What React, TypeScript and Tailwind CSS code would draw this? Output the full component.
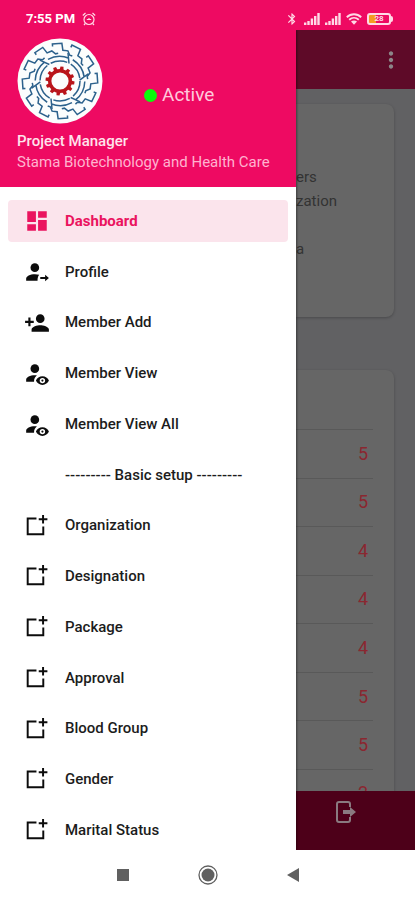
import { ReactNode } from "react";
import { MdBluetooth, MdDashboard, MdMoreVert, MdPersonAdd } from "react-icons/md";

const PERSON = "M10 4a4 4 0 1 0 0 8a4 4 0 0 0 0-8z";

function ProfileIcon() {
  return (
    <svg viewBox="0 0 24 24" className="size-[26px]" fill="currentColor" aria-hidden>
      <path d={PERSON} />
      <path d="M10 14c-4.400 0-8 1.800-8 4v2h10.500c0-2.200.3-4 1.500-5.500C12.800 14.200 11.400 14 10 14z" />
      <path d="M15 16.500h4.500v-2l3.500 3l-3.500 3v-2H15z" />
    </svg>
  );
}

function MemberViewIcon() {
  return (
    <svg viewBox="0 0 24 24" className="size-[26px]" fill="currentColor" aria-hidden>
      <path d={PERSON} />
      <path d="M9.270 20H2v-2c0-2.210 3.580-4 8-4l1.890.110C10.600 15.400 9.100 17 9.270 20z" />
      <path
        fillRule="evenodd"
        d="M17 15c-2.730 0-5.060 1.660-6 4c.940 2.340 3.270 4 6 4s5.060-1.660 6-4c-.940-2.340-3.270-4-6-4zm0 6.500a2.500 2.500 0 1 1 0-5a2.500 2.500 0 0 1 0 5z"
      />
      <circle cx="17" cy="19" r="1" />
    </svg>
  );
}

function AddBoxIcon() {
  return (
    <svg viewBox="0 0 24 24" className="size-[26px]" fill="none" stroke="currentColor" strokeWidth="1.800" aria-hidden>
      <path d="M11.500 5.100H3.400V19.600H17.800V12.500" />
      <path d="M17.600 1.800v8M13.600 5.800h8" />
    </svg>
  );
}

function LogoutIcon() {
  return (
    <svg viewBox="0 0 22 24" className="h-6 w-[22px]" fill="none" stroke="currentColor" strokeWidth="2" aria-hidden>
      <path d="M15 7V4a2 2 0 0 0-2-2H4a2 2 0 0 0-2 2v16a2 2 0 0 0 2 2h9a2 2 0 0 0 2-2v-3" />
      <path d="M8 10h7V7l6 5l-6 5v-3H8z" fill="currentColor" stroke="none" />
    </svg>
  );
}

function SignalIcon() {
  return (
    <svg viewBox="0 0 16 12" className="h-3 w-4" fill="currentColor" aria-hidden>
      <path d="M0 9.500h2.400v2.500H0zM3.300 8h2.400v4H3.300zM6.700 5.500h2.400V12H6.700zM10 3h2.400v9H10zM13.300 0h2.400v12h-2.400z" />
    </svg>
  );
}

function WifiIcon() {
  return (
    <svg viewBox="0 0 16 12" className="h-3 w-4" fill="none" stroke="currentColor" strokeWidth="1.900" aria-hidden>
      <path d="M.8 4.200C5 .200 11 .200 15.200 4.200M3.200 6.800c2.800-2.600 6.800-2.600 9.600 0" />
      <path d="M5 8.500c1.700-1.500 4.300-1.500 6 0l-3 3.200z" fill="currentColor" stroke="none" />
    </svg>
  );
}

function AlarmIcon() {
  return (
    <svg viewBox="0 0 14 14" className="size-[14px]" fill="none" stroke="currentColor" strokeWidth="1.200" aria-hidden>
      <circle cx="7" cy="7.500" r="5" />
      <path d="M.8 3.500L3.500 1M13.200 3.500L10.500 1M4.800 7.500h4.400M7 6v1.500M3.300 11.500L2 13M10.700 11.500L12 13" />
    </svg>
  );
}

const turns = Array.from({ length: 12 }, (_, i) => i * 30);

function Logo() {
  return (
    <svg viewBox="0 0 86 86" className="size-[86px]" role="img" aria-label="Stama logo">
      <circle cx="43" cy="43" r="42.500" fill="#fbfdfd" />
      <g fill="none" stroke="#2c618c" strokeWidth="1.500">
        <circle cx="43" cy="43" r="20" strokeDasharray="17 4" />
        {turns.map((deg) => (
          <path
            key={deg}
            transform={`rotate(${deg - 4} 43 43)`}
            d="M38 8v-2.500h9.500l.5 7l5 1l1.500 4.500l2.500 1"
          />
        ))}
        {turns.filter((deg) => deg % 60 === 0).map((deg) => (
          <path
            key={deg}
            transform={`rotate(${deg} 43 43)`}
            d="M31 21.300A24.500 24.500 0 0 1 52 20.200M51 15L52 25.500"
          />
        ))}
      </g>
      <g fill="#b9151b">
        {turns.map((deg) => (
          <path key={deg} transform={`rotate(${deg + 8} 43 43)`} d="M41 32l.5-3.500h3l.5 3.500z" />
        ))}
      </g>
      <circle cx="43" cy="43" r="10.300" fill="none" stroke="#b9151b" strokeWidth="3.400" />
    </svg>
  );
}

type Item = { label: string; icon?: ReactNode };

const items: Item[] = [
  { label: "Dashboard", icon: <MdDashboard size={26} /> },
  { label: "Profile", icon: <ProfileIcon /> },
  { label: "Member Add", icon: <MdPersonAdd size={26} /> },
  { label: "Member View", icon: <MemberViewIcon /> },
  { label: "Member View All", icon: <MemberViewIcon /> },
  { label: "--------- Basic setup ---------" },
  { label: "Organization", icon: <AddBoxIcon /> },
  { label: "Designation", icon: <AddBoxIcon /> },
  { label: "Package", icon: <AddBoxIcon /> },
  { label: "Approval", icon: <AddBoxIcon /> },
  { label: "Blood Group", icon: <AddBoxIcon /> },
  { label: "Gender", icon: <AddBoxIcon /> },
  { label: "Marital Status", icon: <AddBoxIcon /> },
];

const counts = [5, 5, 4, 4, 4, 5, 5, 2];

function StatusBar() {
  return (
    <div className="z-20 flex h-[30px] shrink-0 items-end justify-between bg-[#ee0a62] pr-[22px] pb-1 pl-[26px] text-[#ffd9e6]">
      <div className="flex items-center gap-[7px]">
        <span className="text-[13px] leading-[14px] font-bold text-white">7:55 PM</span>
        <AlarmIcon />
      </div>
      <div className="flex items-center gap-[5px]">
        <MdBluetooth size={14} />
        <SignalIcon />
        <SignalIcon />
        <WifiIcon />
        <div className="flex items-center">
          <div className="flex h-3 w-6 items-center justify-center rounded-[3px] border-2 border-[#ffd9e6] bg-linear-to-r from-[#f59a23] from-35% to-[#ee0a62] to-35% text-[8px] leading-none font-bold">
            28
          </div>
          <div className="h-[6px] w-[2px] rounded-r bg-[#ffd9e6]" />
        </div>
      </div>
    </div>
  );
}

function Drawer() {
  return (
    <aside className="z-10 flex w-[296px] shrink-0 flex-col bg-white shadow-[1px_0_2px_rgba(0,0,0,0.4)]">
      <header className="h-[157px] shrink-0 bg-[#ee0a62] px-[17px] pt-2">
        <div className="flex items-center gap-[41px]">
          <Logo />
          <div className="flex items-center gap-[5px] pt-7">
            <span className="size-[13px] rounded-full bg-[#0bfb0b]" />
            <span className="text-[19px] leading-6 text-[#ffc9dc]">Active</span>
          </div>
        </div>
        <h1 className="mt-[6px] text-[15px] leading-[22px] font-medium text-[#ffe3ec]">Project Manager</h1>
        <p className="text-[15px] leading-5 whitespace-nowrap text-[#ffb3cf]">Stama Biotechnology and Health Care</p>
      </header>
      <nav className="flex min-h-0 flex-1 flex-col">
        <ul className="-mb-px flex flex-1 flex-col justify-between px-2 pt-[13px] text-[15px] font-medium text-[#1c1c1c]">
          {items.map((item, i) => (
            <li key={item.label}>
              {item.icon ? (
                <a
                  href="#"
                  className={
                    i === 0
                      ? "flex h-[42px] items-center gap-[15px] rounded bg-[#fbe4ec] pl-4 font-bold text-[#ea145f]"
                      : "flex h-[42px] items-center gap-[15px] pl-4"
                  }
                >
                  <span className="text-[#0c0c0c] in-[.font-bold]:text-[#ea145f]">{item.icon}</span>
                  {item.label}
                </a>
              ) : (
                <div className="flex h-[42px] items-center pl-[57px]">{item.label}</div>
              )}
            </li>
          ))}
        </ul>
      </nav>
    </aside>
  );
}

function Home() {
  return (
    <main className="flex min-w-0 flex-1 flex-col bg-[#616163]">
      <header className="flex h-[59px] shrink-0 items-center justify-end bg-[#5e0a28] pr-[11px] text-[#8c8588]">
        <button type="button" aria-label="More options">
          <MdMoreVert size={26} />
        </button>
      </header>
      <div className="min-h-0 flex-1 overflow-hidden pt-[15px] pr-[21px]">
        <section className="h-[213px] rounded-r-lg bg-[#666] pt-[61px] text-[15px] leading-6 text-[#333] shadow-[0_1px_3px_rgba(0,0,0,0.25)]">
          <p>ers</p>
          <p>zation</p>
          <p className="mt-6">a</p>
        </section>
        <section className="mt-[53px] rounded-tr-lg bg-[#666] pt-[59px] pr-[21px] shadow-[0_1px_3px_rgba(0,0,0,0.25)]">
          <table className="h-[388px] w-full text-right text-[18px] leading-6 text-[#8b2730]">
            <tbody>
              {counts.map((count, i) => (
                <tr key={i} className="border-t border-[#595959]">
                  <td className="pr-[5px]">{count}</td>
                </tr>
              ))}
            </tbody>
          </table>
        </section>
      </div>
      <footer className="flex h-[59px] shrink-0 justify-start bg-[#4d0019] pt-[9px] pl-[39px] text-[#8a7a80]">
        <button type="button" aria-label="Log out" className="self-start">
          <LogoutIcon />
        </button>
      </footer>
    </main>
  );
}

function SystemNav() {
  return (
    <div className="z-20 flex h-[50px] shrink-0 items-center justify-center gap-[69px] bg-white text-[#606060]">
      <button type="button" aria-label="Recent apps">
        <svg viewBox="0 0 12 12" className="size-3" fill="currentColor">
          <path d="M0 0h12v12H0z" />
        </svg>
      </button>
      <button type="button" aria-label="Home">
        <svg viewBox="0 0 20 20" className="size-5" fill="currentColor">
          <circle cx="10" cy="10" r="9" fill="none" stroke="currentColor" strokeWidth="1.300" />
          <circle cx="10" cy="10" r="6.500" />
        </svg>
      </button>
      <button type="button" aria-label="Back">
        <svg viewBox="0 0 12 14" className="h-[14px] w-3" fill="currentColor">
          <path d="M12 0v14L0 7z" />
        </svg>
      </button>
    </div>
  );
}

export default function App() {
  return (
    <div className="flex h-screen flex-col overflow-hidden bg-white font-[Roboto,sans-serif]">
      <StatusBar />
      <div className="flex min-h-0 flex-1">
        <Drawer />
        <Home />
      </div>
      <SystemNav />
    </div>
  );
}
